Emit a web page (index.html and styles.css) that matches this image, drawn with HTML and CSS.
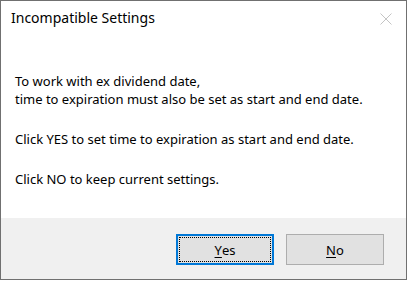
FILE: index.html
```html
<!DOCTYPE html>
<html lang="en">
<head>
  <meta charset="UTF-8">
  <title>Incompatible Settings</title>
  <link rel="stylesheet" href="styles.css">
</head>
<body>
  <div class="dialog">
    <div class="titlebar">
      <span class="title">Incompatible Settings</span>
      <svg class="close" width="12" height="12" viewBox="0 0 12 12">
        <path d="M0.5 0.5 L11.5 11.5 M11.5 0.5 L0.5 11.5" stroke="#c4c4c4" stroke-width="1" fill="none"/>
      </svg>
    </div>
    <div class="message">
      <p>To work with ex dividend date,<br>time to expiration must also be set as start and end date.</p>
      <p>Click YES to set time to expiration as start and end date.</p>
      <p>Click NO to keep current settings.</p>
    </div>
    <div class="footer">
      <button class="btn btn-default"><span class="focus"><u>Y</u>es</span></button>
      <button class="btn"><u>N</u>o</button>
    </div>
  </div>
</body>
</html>
```

FILE: styles.css
```css
html, body {
  margin: 0;
  padding: 0;
  background: #fff;
  font-family: "Noto Sans", "Open Sans", sans-serif;
}
.dialog {
  width: 405px;
  height: 278px;
  border: 1px solid #707070;
  background: #fff;
  display: flex;
  flex-direction: column;
}
.titlebar {
  height: 36px;
  display: flex;
  align-items: flex-start;
  justify-content: space-between;
  padding: 0 14px 0 10px;
}
.title {
  font-size: 14px;
  color: #000;
  margin-top: 7px;
}
.close {
  margin-top: 12px;
}
.message {
  flex: 1;
  padding: 0 14px;
  font-size: 13px;
  color: #000;
}
.message p {
  margin: 0 0 22px;
  line-height: 18px;
}
.message p:first-child {
  margin-top: 35px;
}
.footer {
  height: 61px;
  background: #f0f0f0;
  display: flex;
  justify-content: flex-end;
  align-items: flex-start;
  gap: 12px;
  padding: 0 22px 0 0;
}
.btn {
  margin-top: 16px;
  width: 98px;
  height: 31px;
  border: 1px solid #adadad;
  background: #e1e1e1;
  font-family: inherit;
  font-size: 13px;
  color: #000;
  padding: 0;
}
.btn u {
  text-underline-offset: 2px;
}
.btn-default {
  border: 2px solid #0078d7;
  padding: 1px;
}
.btn-default .focus {
  display: flex;
  align-items: center;
  justify-content: center;
  height: 100%;
  box-sizing: border-box;
  border: 1px dotted #000;
}
```
